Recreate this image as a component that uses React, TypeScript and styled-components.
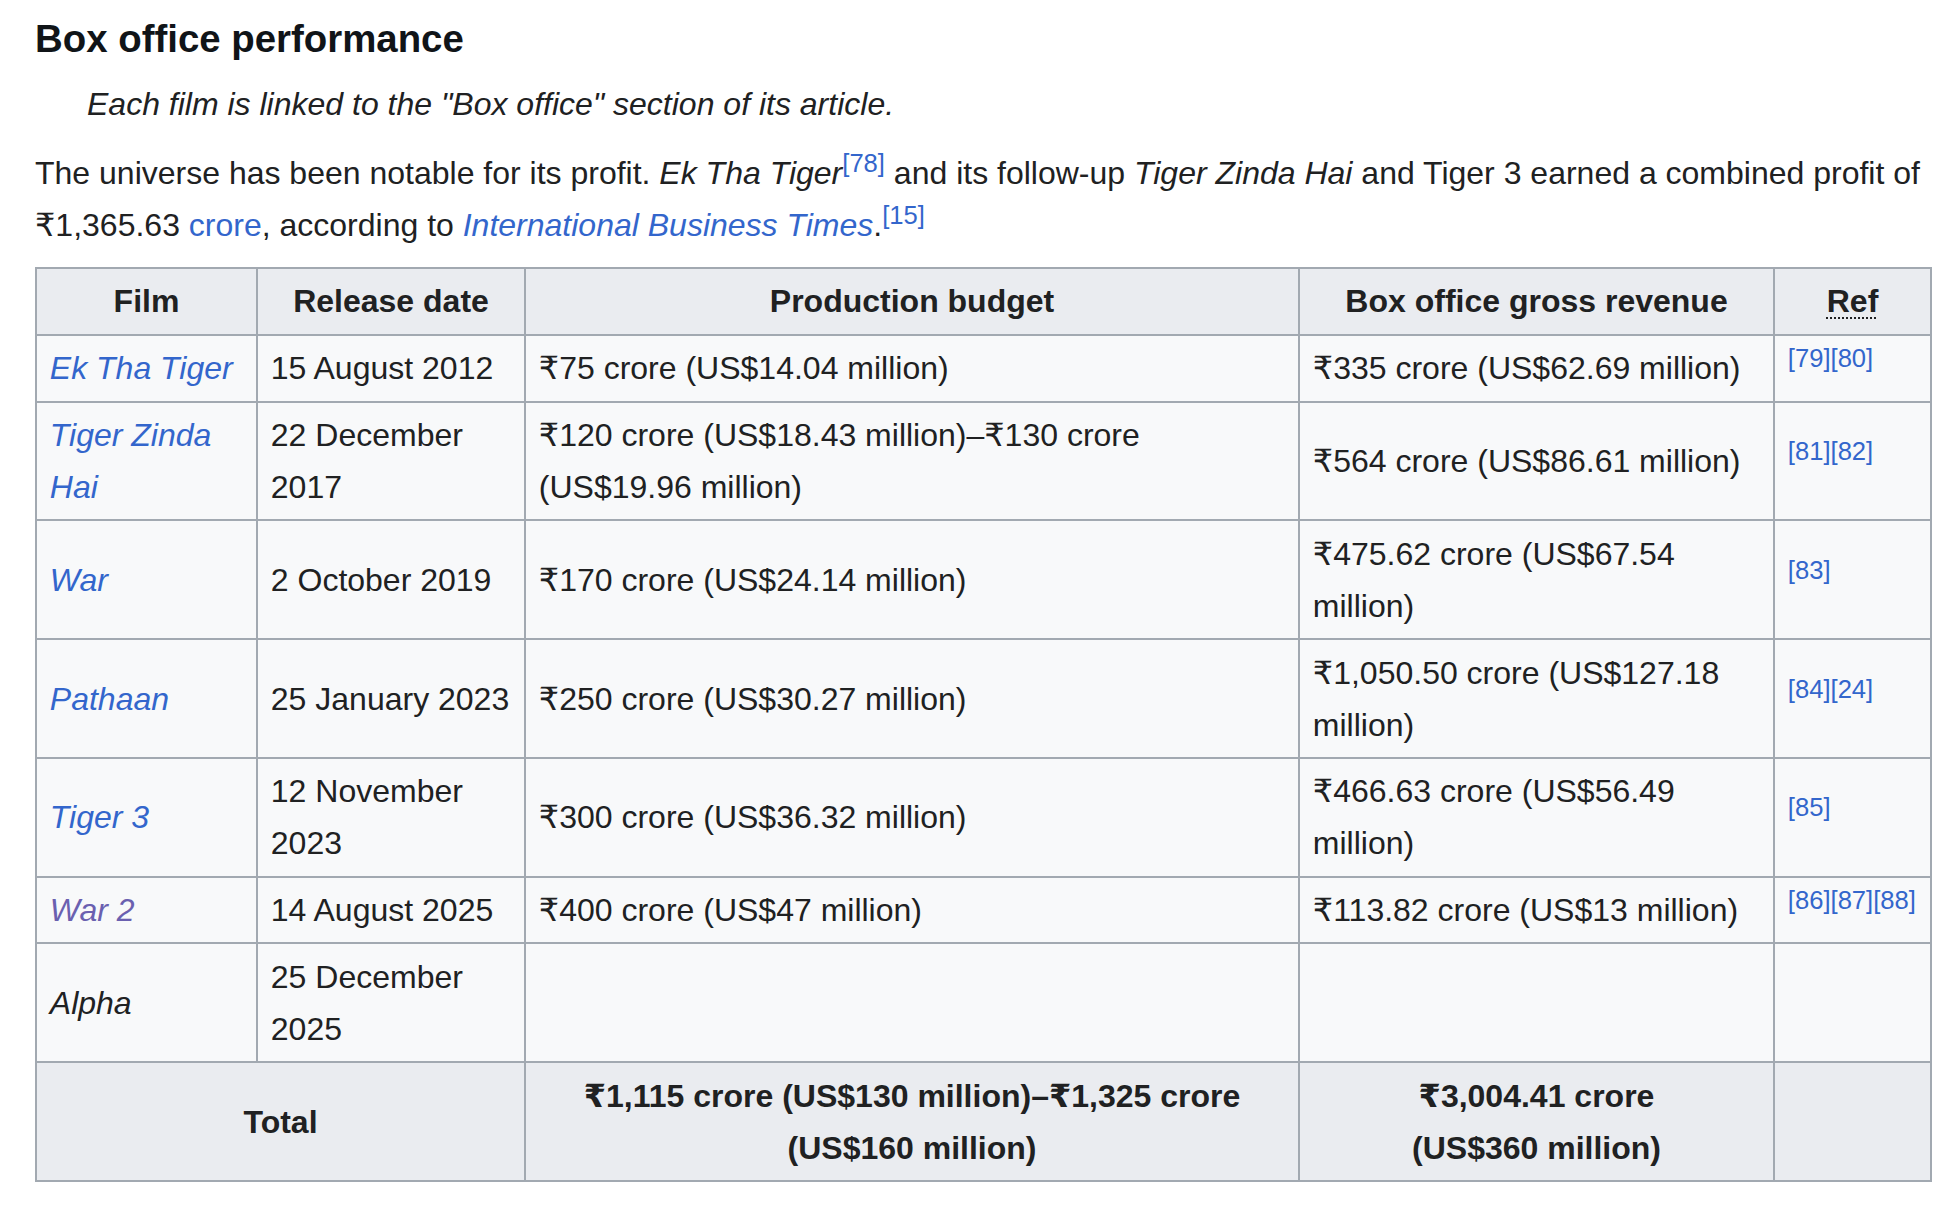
import React from "react";
import styled, { createGlobalStyle } from "styled-components";

const GlobalStyle = createGlobalStyle`
  html, body {
    margin: 0;
    padding: 0;
    background: #ffffff;
  }
  body {
    font-family: "Liberation Sans", Arial, "DejaVu Sans", sans-serif;
    color: #202122;
  }
`;

const Page = styled.div`
  padding: 8px 18px 40px 35px;
  font-size: 32px;
  line-height: 52px;
  color: #202122;
`;

const SectionHeading = styled.h3`
  margin: 0;
  font-size: 38.4px;
  line-height: 61px;
  font-weight: 700;
  color: #101418;
`;

const Hatnote = styled.div`
  margin-top: 9px;
  padding-left: 52px;
  font-style: italic;
`;

const Paragraph = styled.p`
  margin: 17px 0 0;
`;

const Link = styled.a<{ $visited?: boolean }>`
  color: ${(p) => (p.$visited ? "#6a60b0" : "#3366cc")};
  text-decoration: none;
`;

const Italic = styled.i`
  font-style: italic;
`;

const RefSup = styled.sup`
  font-size: 80%;
  line-height: 1;
  vertical-align: super;
  font-style: normal;
  font-weight: normal;
  white-space: nowrap;
`;

const RefLink = styled.a`
  color: #3366cc;
  text-decoration: none;
`;

const WikiTable = styled.table`
  margin-top: 16px;
  width: 1895px;
  table-layout: fixed;
  border-collapse: collapse;
  background: #f8f9fa;
  border: 2px solid #a2a9b1;
  color: #202122;
  font-size: 32px;
  line-height: 52px;
`;

const Col = styled.col<{ $w: number }>`
  width: ${(p) => p.$w}px;
`;

const HeadCell = styled.th`
  background: #eaecf0;
  border: 2px solid #a2a9b1;
  padding: 6.4px 12.8px;
  font-weight: 700;
  text-align: center;
  vertical-align: middle;
`;

const Cell = styled.td`
  border: 2px solid #a2a9b1;
  padding: 6.4px 12.8px;
  text-align: left;
  vertical-align: middle;
`;

const NoWrap = styled.span`
  white-space: nowrap;
`;

const Abbr = styled.abbr`
  text-decoration: underline dotted;
  text-decoration-thickness: 2px;
  text-underline-offset: 5px;
  cursor: help;
`;

const FilmName = styled.i`
  font-style: italic;
`;

type Row = {
  film: string;
  link: boolean;
  visited?: boolean;
  date: string;
  budget: string;
  gross: string;
  refs: string[];
};

const rows: Row[] = [
  {
    film: "Ek Tha Tiger",
    link: true,
    date: "15 August 2012",
    budget: "₹75 crore (US$14.04 million)",
    gross: "₹335 crore (US$62.69 million)",
    refs: ["79", "80"],
  },
  {
    film: "Tiger Zinda Hai",
    link: true,
    date: "22 December 2017",
    budget: "₹120 crore (US$18.43 million)–₹130 crore (US$19.96 million)",
    gross: "₹564 crore (US$86.61 million)",
    refs: ["81", "82"],
  },
  {
    film: "War",
    link: true,
    date: "2 October 2019",
    budget: "₹170 crore (US$24.14 million)",
    gross: "₹475.62 crore (US$67.54 million)",
    refs: ["83"],
  },
  {
    film: "Pathaan",
    link: true,
    date: "25 January 2023",
    budget: "₹250 crore (US$30.27 million)",
    gross: "₹1,050.50 crore (US$127.18 million)",
    refs: ["84", "24"],
  },
  {
    film: "Tiger 3",
    link: true,
    date: "12 November 2023",
    budget: "₹300 crore (US$36.32 million)",
    gross: "₹466.63 crore (US$56.49 million)",
    refs: ["85"],
  },
  {
    film: "War 2",
    link: true,
    visited: true,
    date: "14 August 2025",
    budget: "₹400 crore (US$47 million)",
    gross: "₹113.82 crore (US$13 million)",
    refs: ["86", "87", "88"],
  },
  {
    film: "Alpha",
    link: false,
    date: "25 December 2025",
    budget: "",
    gross: "",
    refs: [],
  },
];

function Refs({ ids }: { ids: string[] }) {
  if (ids.length === 0) return null;
  return (
    <>
      {ids.map((id) => (
        <RefSup key={id}>
          <RefLink href={`#cite_note-${id}`}>[{id}]</RefLink>
        </RefSup>
      ))}
    </>
  );
}

export default function App() {
  return (
    <>
      <GlobalStyle />
      <Page>
        <SectionHeading>Box office performance</SectionHeading>
        <Hatnote>Each film is linked to the "Box office" section of its article.</Hatnote>
        <Paragraph>
          The universe has been notable for its profit. <Italic>Ek Tha Tiger</Italic>
          <Refs ids={["78"]} /> and its follow-up <Italic>Tiger Zinda Hai</Italic> and Tiger 3
          earned a combined profit of ₹1,365.63 <Link href="#crore">crore</Link>, according to{" "}
          <Italic>
            <Link href="#ibt">International Business Times</Link>
          </Italic>
          .<Refs ids={["15"]} />
        </Paragraph>
        <WikiTable>
          <colgroup>
            <Col $w={221} />
            <Col $w={268} />
            <Col $w={774} />
            <Col $w={475} />
            <Col $w={157} />
          </colgroup>
          <thead>
            <tr>
              <HeadCell>Film</HeadCell>
              <HeadCell>Release date</HeadCell>
              <HeadCell>Production budget</HeadCell>
              <HeadCell>Box office gross revenue</HeadCell>
              <HeadCell>
                <Abbr title="Reference">Ref</Abbr>
              </HeadCell>
            </tr>
          </thead>
          <tbody>
            {rows.map((r) => (
              <tr key={r.film}>
                <Cell>
                  {r.link ? (
                    <FilmName>
                      <Link href={`#${r.film}`} $visited={r.visited}>
                        {r.film}
                      </Link>
                    </FilmName>
                  ) : (
                    <FilmName>{r.film}</FilmName>
                  )}
                </Cell>
                <Cell>{r.date}</Cell>
                <Cell>{r.budget}</Cell>
                <Cell>{r.gross}</Cell>
                <Cell>
                  <Refs ids={r.refs} />
                </Cell>
              </tr>
            ))}
            <tr>
              <HeadCell colSpan={2}>Total</HeadCell>
              <HeadCell>
                ₹1,115 crore (US$130 million)–₹1,325 crore <NoWrap>(US$160 million)</NoWrap>
              </HeadCell>
              <HeadCell>
                ₹3,004.41 crore <NoWrap>(US$360 million)</NoWrap>
              </HeadCell>
              <HeadCell />
            </tr>
          </tbody>
        </WikiTable>
      </Page>
    </>
  );
}
